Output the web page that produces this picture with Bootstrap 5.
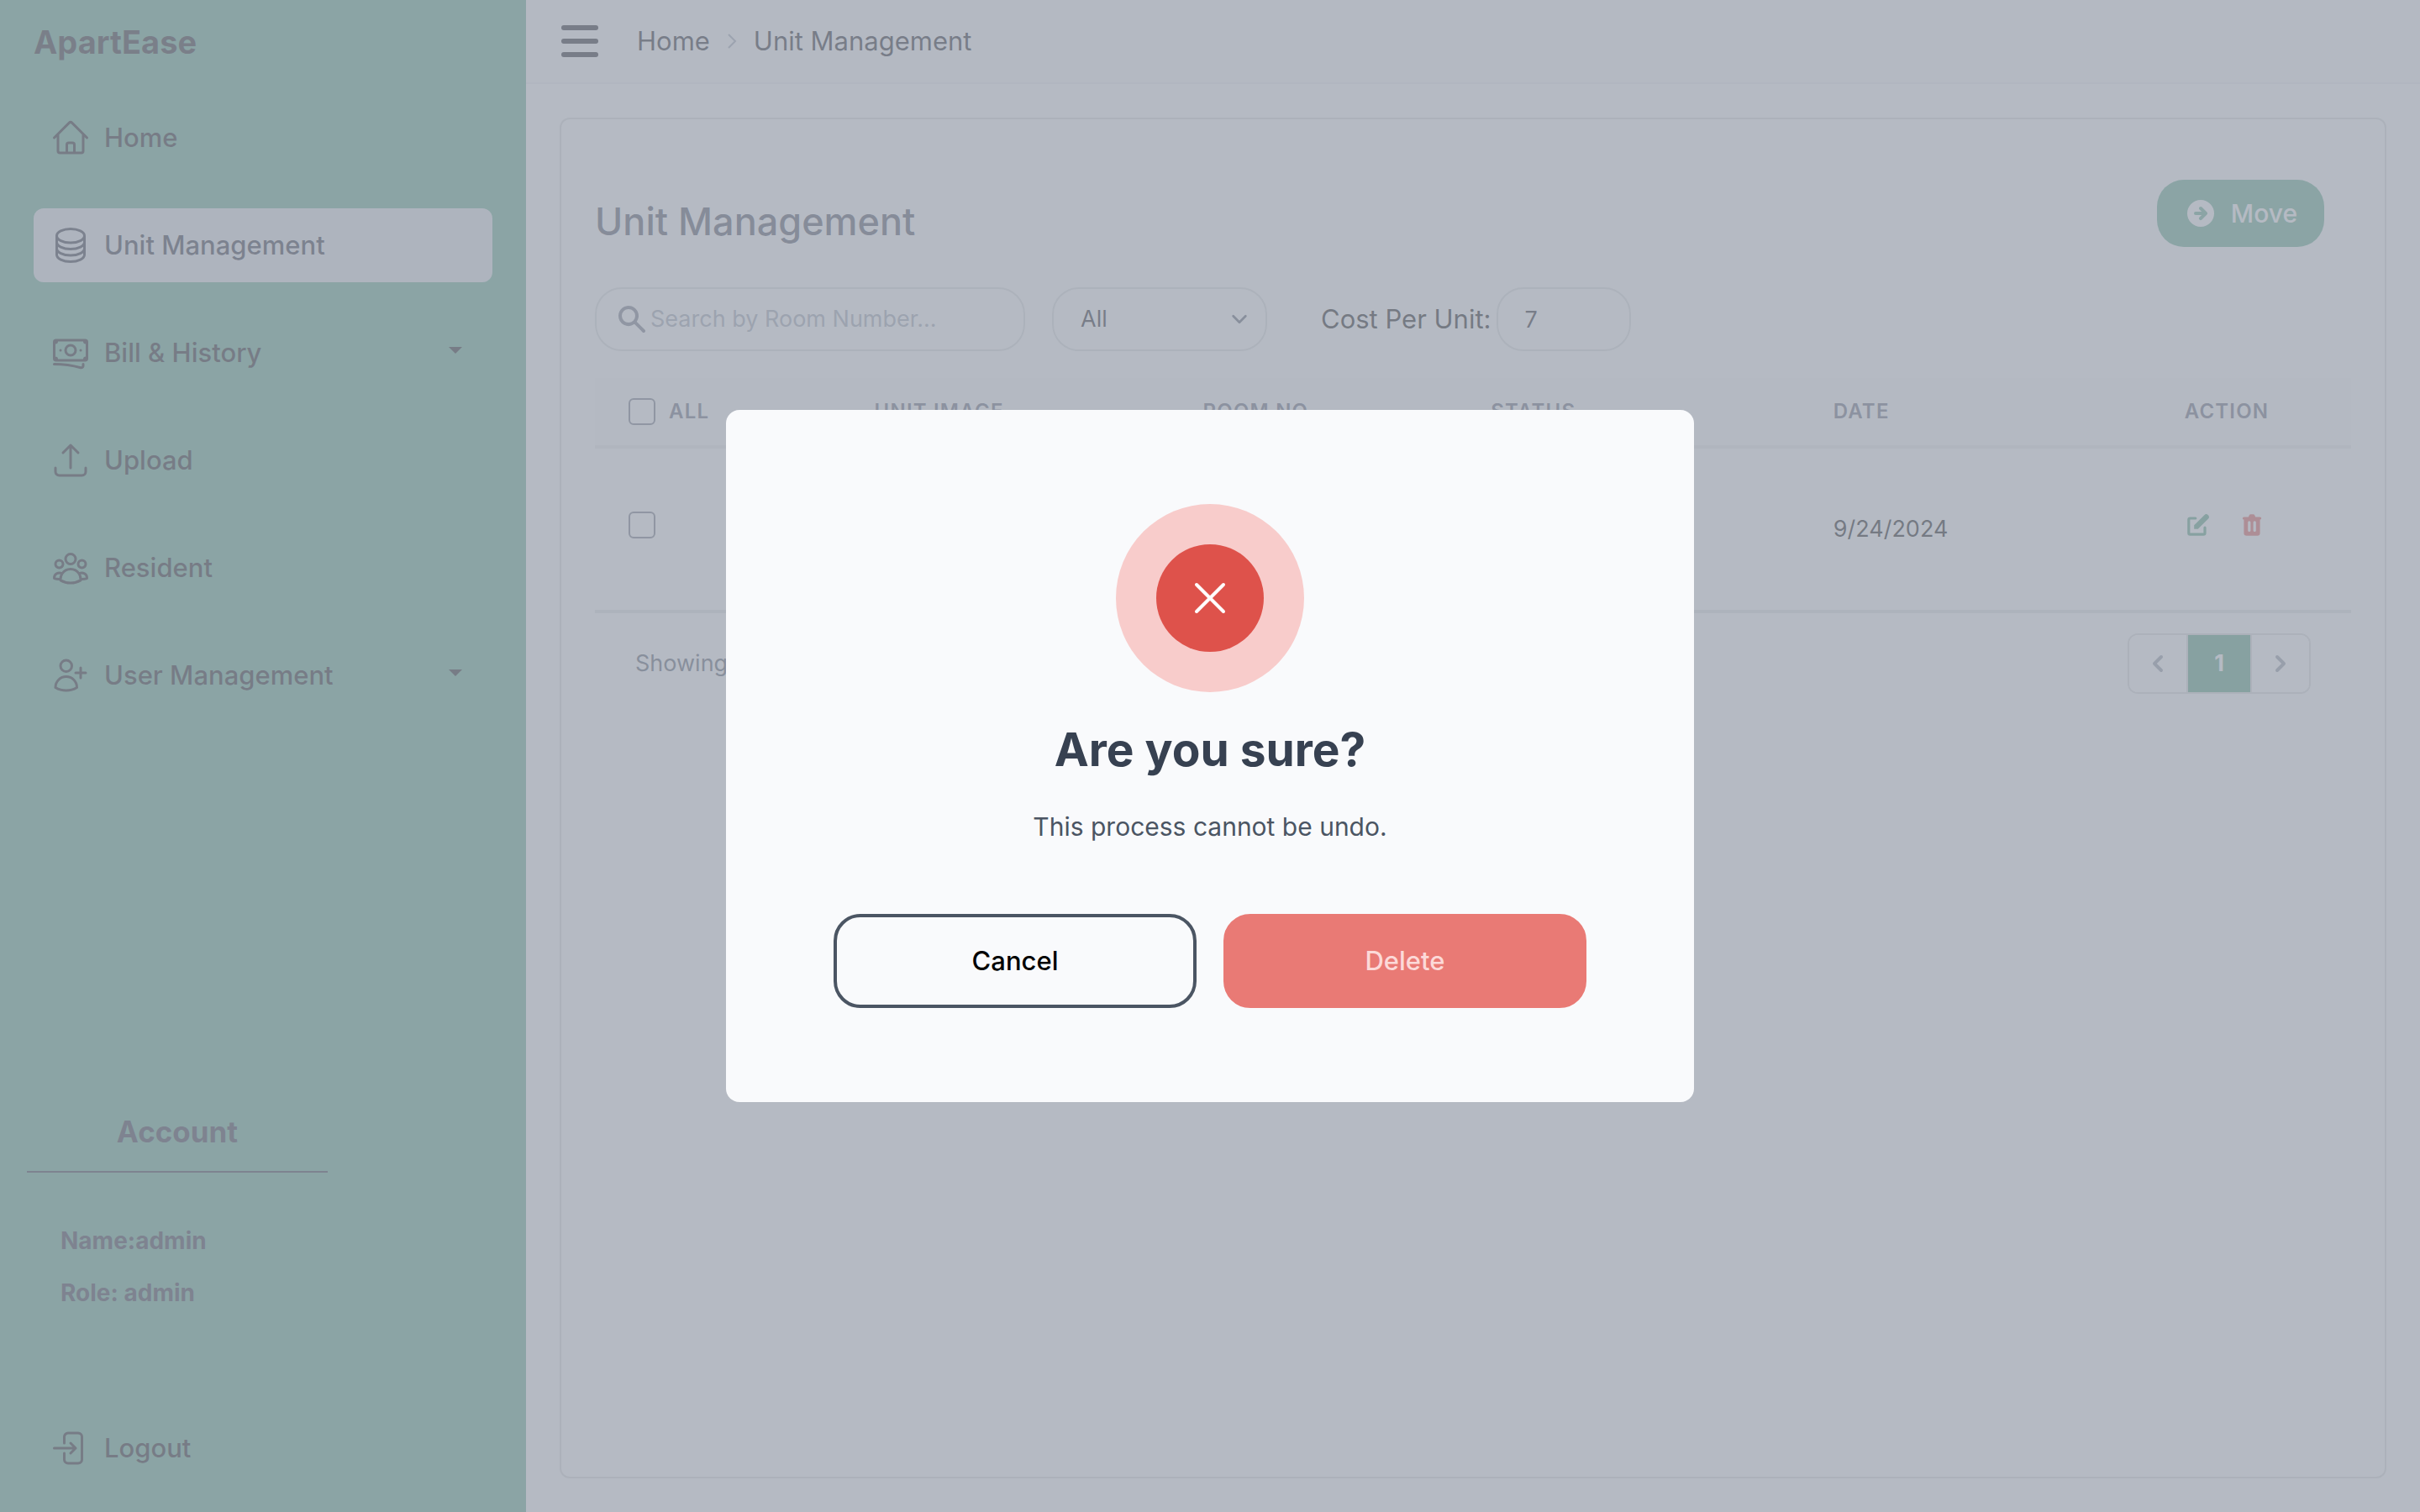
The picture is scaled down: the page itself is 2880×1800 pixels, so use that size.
<!DOCTYPE html>
<html lang="en">
<head>
<meta charset="utf-8">
<meta name="viewport" content="width=device-width, initial-scale=1">
<title>ApartEase - Unit Management</title>
<link href="https://cdn.jsdelivr.net/npm/bootstrap@5.3.0/dist/css/bootstrap.min.css" rel="stylesheet">
<style>
  body { font-family: Inter, "Liberation Sans", sans-serif; font-size: 31px; line-height: 48px; color: #000; background: #fff; }
  .stroke-icon { width: 48px; height: 48px; fill: none; stroke: currentColor; stroke-width: 1.5; stroke-linecap: round; stroke-linejoin: round; flex: none; }
  .solid-icon { width: 40px; height: 40px; fill: currentColor; flex: none; }
  .solid-icon.icon-sm { width: 32px; height: 32px; }

  /* Sidebar */
  .side-panel { width: 626px; flex: none; background: #58a888; padding: 22px 40px 32px; }
  .brand-name { font-size: 38px; font-weight: 700; line-height: 56px; color: #16161a; margin-bottom: 42px; }
  .side-menu { gap: 40px; }
  .side-link { display: flex; align-items: center; gap: 16px; width: 100%; padding: 20px; border: 0; border-radius: 12px; background: transparent; color: #08080c; font-weight: 500; text-align: left; text-decoration: none; }
  .side-link.current { background: #e2e8ec; color: #1f2330; }
  .caret-down { width: 16px; height: 8px; fill: currentColor; margin: 0 16px 6px auto; }
  .account-box { width: 358px; margin-left: -8px; color: #262634; font-weight: 700; }
  .account-title { font-size: 35px; font-weight: 700; margin: 0; padding-bottom: 26px; border-bottom: 2px solid #262634; text-align: center; }
  .account-facts { font-size: 28px; line-height: 62px; padding: 50px 40px 110px; margin: 0; }

  /* Top bar */
  .top-bar { height: 100px; padding: 0 42px; gap: 46px; background: #f9fafb; border-bottom: 2px solid #eeeff2; }
  .menu-btn { border: 0; padding: 0; background: transparent; display: flex; }
  .menu-btn svg { width: 44px; height: 38px; fill: #0c0c14; }
  .crumbs { gap: 20px; }
  .crumbs a, .crumbs span { color: #0c0c14; text-decoration: none; }
  .crumbs svg { width: 12px; height: 18px; fill: none; stroke: #9ca3af; stroke-width: 2; }

  /* Content */
  .content-area { padding: 40px; }
  .panel { border: 2px solid #d9dbdb; border-radius: 12px; padding: 72px 40px 40px; }
  .panel-title { font-size: 45px; font-weight: 500; line-height: 64px; color: #44495a; margin: 18px 0 0; }
  .move-btn { display: flex; align-items: center; gap: 16px; height: 80px; margin-right: 32px; padding: 0 32px; border: 0; border-radius: 32px; background: #58a888; color: #fff; font-size: 30px; font-weight: 500; }
  .round-field { height: 76px; border: 2px solid #dcdede; border-radius: 32px; background-color: #fff; color: #0c0c14; font-size: 27px; }
  .filters { margin-top: 46px; margin-bottom: 32px; gap: 32px; }
  .search-box { display: flex; align-items: center; width: 512px; padding: 0 22px; color: #6b7280; }
  .search-box input { flex: 1; min-width: 0; border: 0; outline: 0; padding: 0; margin-left: 2px; background: transparent; font-size: 27px; color: #111; }
  .search-box input::placeholder { color: #9ca3af; opacity: 1; }
  .room-filter { width: 256px; padding: 0 64px 0 32px; background-size: 22px 22px; background-position: right 20px center;
    background-image: url("data:image/svg+xml,%3csvg xmlns='http://www.w3.org/2000/svg' viewBox='0 0 24 24'%3e%3cpath fill='none' stroke='%234b5563' stroke-width='3' stroke-linecap='round' stroke-linejoin='round' d='M4 8l8 8 8-8'/%3e%3c/svg%3e"); }
  .cost-group { margin-left: 32px; gap: 6px; }
  .cost-field { width: 160px; padding: 0 32px; }

  .unit-table { table-layout: fixed; width: 100%; margin: 0; }
  .unit-table th { height: 82px; padding: 0 40px; background: #f9fafb; border-bottom: 4px solid #e9ebeb; color: #5b6273; font-size: 24px; font-weight: 600; letter-spacing: 0.05em; line-height: 32px; text-transform: uppercase; }
  .unit-table td { height: 196px; padding: 0 40px; border-bottom: 4px solid #e0e2e2; font-size: 27px; }
  .unit-table .control-cell { padding-bottom: 10px; }
  .unit-table .form-check-input { width: 32px; height: 32px; margin: 0; border: 2px solid #6b7280; border-radius: 6px; background-color: #fff; flex: none; }
  .row-actions { gap: 32px; }
  .icon-btn { border: 0; padding: 0; background: transparent; display: flex; }
  .icon-btn.edit { color: #4a9b78; }
  .icon-btn.remove { color: #e0524b; }
  .table-foot { padding: 24px 48px; color: #4b5563; font-size: 27px; }
  .pager { border: 2px solid #d9dbdb; border-radius: 12px; overflow: hidden; color: #8b92a0; }
  .pager button { width: 70px; height: 68px; border: 0 solid #d9dbdb; padding: 0; background: #fff; color: inherit; display: flex; align-items: center; justify-content: center; }
  .pager button:first-child { border-right-width: 2px; }
  .pager button:last-child { border-left-width: 2px; }
  .pager .page-now { width: 74px; background: #4a9b78; color: #fff; font-weight: 700; }

  /* Confirmation dialog over a grey veil */
  .veil { background: rgba(156, 163, 175, .75); }
  .veil .modal-dialog { max-width: 1152px; }
  .confirm-box { border: 0; border-radius: 16px; background: #f9fafc; padding: 112px 128px; align-items: center; text-align: center; }
  .ring { width: 224px; height: 224px; background: #f8cccb; }
  .ring-core { width: 128px; height: 128px; background: #de524b; }
  .ring-core svg { width: 48px; height: 48px; stroke: #fff; stroke-width: 2; stroke-linecap: round; }
  .confirm-title { font-size: 55px; font-weight: 700; line-height: 72px; color: #374151; margin: 32px 0; }
  .confirm-text { font-size: 30px; color: #4b5563; line-height: 48px; margin: 0 0 80px; }
  .choices { gap: 32px; }
  .choice-btn { flex: 1; height: 112px; border: 4px solid #4b5563; border-radius: 32px; background: transparent; color: #000; font-weight: 500; }
  .choice-btn.danger { border-color: #e97a75; background: #e97a75; color: #fcd9d8; }
</style>
<script src="https://cdn.jsdelivr.net/npm/bootstrap@5.3.0/dist/js/bootstrap.bundle.min.js"></script>
</head>
<body>
<div class="d-flex min-vh-100">

  <aside class="side-panel d-flex flex-column">
    <div class="brand-name">ApartEase</div>
    <nav class="side-menu d-flex flex-column">
      <a class="side-link" href="#">
        <svg class="stroke-icon" viewBox="0 0 24 24"><path d="m2.25 12 8.954-8.955c.44-.439 1.152-.439 1.591 0L21.75 12M4.5 9.75v10.125c0 .621.504 1.125 1.125 1.125H9.75v-4.875c0-.621.504-1.125 1.125-1.125h2.25c.621 0 1.125.504 1.125 1.125V21h4.125c.621 0 1.125-.504 1.125-1.125V9.75M8.25 21h8.25"/></svg>
        Home
      </a>
      <a class="side-link current" href="#" aria-current="page">
        <svg class="stroke-icon" viewBox="0 0 24 24"><path d="M20.25 6.375c0 2.278-3.694 4.125-8.25 4.125S3.75 8.653 3.75 6.375m16.5 0c0-2.278-3.694-4.125-8.25-4.125S3.75 4.097 3.75 6.375m16.5 0v11.25c0 2.278-3.694 4.125-8.25 4.125s-8.25-1.847-8.25-4.125V6.375m16.5 0v3.75m-16.5-3.75v3.75m16.5 0v3.75C20.25 16.153 16.556 18 12 18s-8.25-1.847-8.25-4.125v-3.75m16.5 0c0 2.278-3.694 4.125-8.25 4.125s-8.25-1.847-8.25-4.125"/></svg>
        Unit Management
      </a>
      <button class="side-link" type="button">
        <svg class="stroke-icon" viewBox="0 0 24 24"><path d="M2.25 18.75a60.07 60.07 0 0 1 15.797 2.101c.727.198 1.453-.342 1.453-1.096V18.75M3.75 4.5v.75A.75.75 0 0 1 3 6h-.75m0 0v-.375c0-.621.504-1.125 1.125-1.125H20.25M2.25 6v9m18-10.5v.75c0 .414.336.75.75.75h.75m-1.5-1.5h.375c.621 0 1.125.504 1.125 1.125v9.75c0 .621-.504 1.125-1.125 1.125h-.375m1.5-1.5H21a.75.75 0 0 0-.75.75v.75m0 0H3.75m0 0h-.375a1.125 1.125 0 0 1-1.125-1.125V15m1.5 1.5v-.75A.75.75 0 0 0 3 15h-.75M15 10.5a3 3 0 1 1-6 0 3 3 0 0 1 6 0Zm3 0h.008v.008H18V10.5Zm-12 0h.008v.008H6V10.5Z"/></svg>
        Bill &amp; History
        <svg class="caret-down" viewBox="0 0 16 8"><path d="M0 0h16L8 8z"/></svg>
      </button>
      <a class="side-link" href="#">
        <svg class="stroke-icon" viewBox="0 0 24 24"><path d="M3 16.5v2.25A2.25 2.25 0 0 0 5.25 21h13.5A2.25 2.25 0 0 0 21 18.75V16.5m-13.5-9L12 3m0 0 4.5 4.5M12 3v13.5"/></svg>
        Upload
      </a>
      <a class="side-link" href="#">
        <svg class="stroke-icon" viewBox="0 0 24 24"><path d="M18 18.72a9.094 9.094 0 0 0 3.741-.479 3 3 0 0 0-4.682-2.72m.94 3.198.001.031c0 .225-.012.447-.037.666A11.944 11.944 0 0 1 12 21c-2.17 0-4.207-.576-5.963-1.584A6.062 6.062 0 0 1 6 18.719m12 0a5.971 5.971 0 0 0-.941-3.197m0 0A5.995 5.995 0 0 0 12 12.75a5.995 5.995 0 0 0-5.058 2.772m0 0a3 3 0 0 0-4.681 2.72 8.986 8.986 0 0 0 3.74.477m.94-3.197a5.971 5.971 0 0 0-.94 3.197M15 6.75a3 3 0 1 1-6 0 3 3 0 0 1 6 0Zm6 3a2.25 2.25 0 1 1-4.5 0 2.25 2.25 0 0 1 4.5 0Zm-13.5 0a2.25 2.25 0 1 1-4.5 0 2.25 2.25 0 0 1 4.5 0Z"/></svg>
        Resident
      </a>
      <button class="side-link" type="button">
        <svg class="stroke-icon" viewBox="0 0 24 24"><path d="M18 7.5v3m0 0v3m0-3h3m-3 0h-3m-2.25-4.125a3.375 3.375 0 1 1-6.75 0 3.375 3.375 0 0 1 6.75 0ZM3 19.235v-.11a6.375 6.375 0 0 1 12.75 0v.109A12.318 12.318 0 0 1 9.374 21c-2.331 0-4.512-.645-6.374-1.766Z"/></svg>
        User Management
        <svg class="caret-down" viewBox="0 0 16 8"><path d="M0 0h16L8 8z"/></svg>
      </button>
    </nav>

    <div class="mt-auto">
      <div class="account-box">
        <h2 class="account-title">Account</h2>
        <div class="account-facts">
          <div>Name:admin</div>
          <div>Role: admin</div>
        </div>
      </div>
      <a class="side-link" href="#">
        <svg class="stroke-icon" viewBox="0 0 24 24"><path d="M8.25 9V5.25A2.25 2.25 0 0 1 10.5 3h6a2.25 2.25 0 0 1 2.25 2.25v13.5A2.25 2.25 0 0 1 16.5 21h-6a2.25 2.25 0 0 1-2.25-2.25V15M12 9l3 3m0 0-3 3m3-3H2.25"/></svg>
        Logout
      </a>
    </div>
  </aside>

  <div class="flex-grow-1 d-flex flex-column">
    <header class="top-bar d-flex align-items-center">
      <button class="menu-btn" type="button" aria-label="Toggle menu">
        <svg viewBox="0 0 44 38"><rect width="44" height="6" rx="3"/><rect y="16" width="44" height="6" rx="3"/><rect y="32" width="44" height="6" rx="3"/></svg>
      </button>
      <nav class="crumbs d-flex align-items-center" aria-label="Breadcrumb">
        <a href="#">Home</a>
        <svg viewBox="0 0 12 18"><path d="M2 1l8 8-8 8"/></svg>
        <span>Unit Management</span>
      </nav>
    </header>

    <main class="content-area flex-grow-1 d-flex flex-column">
      <section class="panel flex-grow-1">
        <div class="d-flex justify-content-between align-items-start">
          <h1 class="panel-title">Unit Management</h1>
          <button class="move-btn" type="button">
            <svg class="solid-icon" viewBox="0 0 20 20"><path fill-rule="evenodd" d="M10 18a8 8 0 100-16 8 8 0 000 16zm3.707-8.707l-3-3a1 1 0 00-1.414 1.414L10.586 9H7a1 1 0 100 2h3.586l-1.293 1.293a1 1 0 101.414 1.414l3-3a1 1 0 000-1.414z"/></svg>
            Move
          </button>
        </div>

        <div class="filters d-flex align-items-center">
          <div class="search-box round-field">
            <svg class="solid-icon" viewBox="0 0 20 20"><path fill-rule="evenodd" d="M8 4a4 4 0 100 8 4 4 0 000-8zM2 8a6 6 0 1110.89 3.476l4.817 4.817a1 1 0 01-1.414 1.414l-4.816-4.816A6 6 0 012 8z"/></svg>
            <input type="text" placeholder="Search by Room Number..." aria-label="Search by Room Number">
          </div>
          <select class="form-select round-field room-filter" aria-label="Filter units">
            <option>All</option>
          </select>
          <div class="cost-group d-flex align-items-center">
            <label for="cost">Cost Per Unit:</label>
            <input class="round-field cost-field" id="cost" type="text" value="7">
          </div>
        </div>

        <table class="unit-table">
          <colgroup><col style="width:14%"><col style="width:18.7%"><col style="width:16.4%"><col style="width:19.5%"><col style="width:20%"><col style="width:11.4%"></colgroup>
          <thead>
            <tr>
              <th scope="col"><div class="d-flex align-items-center gap-3"><input class="form-check-input" type="checkbox" id="all"><label for="all">All</label></div></th>
              <th scope="col">Unit Image</th>
              <th scope="col">Room No</th>
              <th scope="col">Status</th>
              <th scope="col">Date</th>
              <th scope="col">Action</th>
            </tr>
          </thead>
          <tbody>
            <tr>
              <td class="control-cell"><input class="form-check-input d-block" type="checkbox" aria-label="Select unit"></td>
              <td></td>
              <td></td>
              <td></td>
              <td>9/24/2024</td>
              <td class="control-cell">
                <div class="row-actions d-flex">
                  <button class="icon-btn edit" type="button" aria-label="Edit"><svg class="solid-icon icon-sm" viewBox="0 0 20 20"><path d="M17.414 2.586a2 2 0 00-2.828 0L7 10.172V13h2.828l7.586-7.586a2 2 0 000-2.828z"/><path fill-rule="evenodd" d="M2 6a2 2 0 012-2h4a1 1 0 010 2H4v10h10v-4a1 1 0 112 0v4a2 2 0 01-2 2H4a2 2 0 01-2-2V6z"/></svg></button>
                  <button class="icon-btn remove" type="button" aria-label="Delete"><svg class="solid-icon icon-sm" viewBox="0 0 20 20"><path fill-rule="evenodd" d="M9 2a1 1 0 00-.894.553L7.382 4H4a1 1 0 000 2v10a2 2 0 002 2h8a2 2 0 002-2V6a1 1 0 100-2h-3.382l-.724-1.447A1 1 0 0011 2H9zM7 8a1 1 0 012 0v6a1 1 0 11-2 0V8zm5-1a1 1 0 00-1 1v6a1 1 0 102 0V8a1 1 0 00-1-1z"/></svg></button>
                </div>
              </td>
            </tr>
          </tbody>
        </table>

        <div class="table-foot d-flex justify-content-between align-items-center">
          <div>Showing</div>
          <div class="pager d-flex">
            <button type="button" aria-label="Previous"><svg class="solid-icon" viewBox="0 0 20 20"><path d="M12.707 5.293a1 1 0 010 1.414L9.414 10l3.293 3.293a1 1 0 01-1.414 1.414l-4-4a1 1 0 010-1.414l4-4a1 1 0 011.414 0z"/></svg></button>
            <button type="button" class="page-now" aria-current="page">1</button>
            <button type="button" aria-label="Next"><svg class="solid-icon" viewBox="0 0 20 20"><path d="M7.293 14.707a1 1 0 010-1.414L10.586 10 7.293 6.707a1 1 0 011.414-1.414l4 4a1 1 0 010 1.414l-4 4a1 1 0 01-1.414 0z"/></svg></button>
          </div>
        </div>
      </section>
    </main>
  </div>
</div>

<div class="modal d-block veil" role="dialog" aria-modal="true" aria-labelledby="confirm-title">
  <div class="modal-dialog modal-dialog-centered">
    <div class="modal-content confirm-box">
      <div class="ring rounded-circle d-flex align-items-center justify-content-center">
        <div class="ring-core rounded-circle d-flex align-items-center justify-content-center">
          <svg viewBox="0 0 24 24"><path d="M4 4l16 16M20 4L4 20"/></svg>
        </div>
      </div>
      <h2 class="confirm-title" id="confirm-title">Are you sure?</h2>
      <p class="confirm-text">This process cannot be undo.</p>
      <div class="choices d-flex w-100">
        <button class="choice-btn" type="button">Cancel</button>
        <button class="choice-btn danger" type="button">Delete</button>
      </div>
    </div>
  </div>
</div>
</body>
</html>
